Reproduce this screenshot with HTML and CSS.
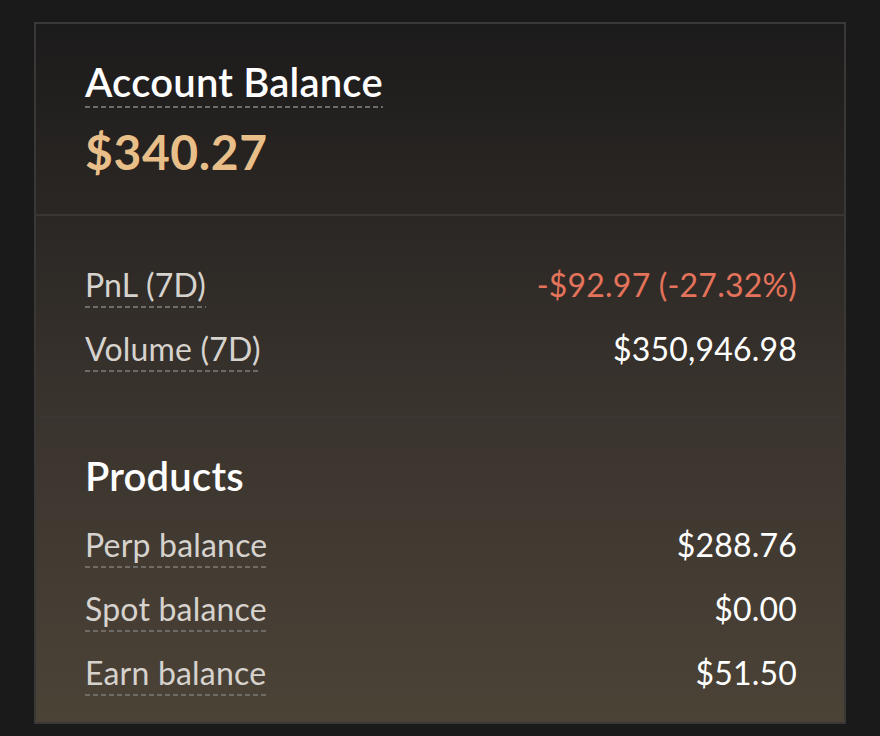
FILE: index.html
```html
<!DOCTYPE html>
<html>
<head>
<meta charset="utf-8">
<link rel="stylesheet" href="styles.css">
</head>
<body>
<div class="card">
  <section class="sec sec-top">
    <div class="title"><span class="dotted">Account Balance</span></div>
    <div class="big">$340.27</div>
  </section>
  <section class="sec sec-mid">
    <div class="rows">
      <div class="row"><span class="label dotted">PnL (7D)</span><span class="val neg">-$92.97 (-27.32%)</span></div>
      <div class="row"><span class="label dotted">Volume (7D)</span><span class="val">$350,946.98</span></div>
    </div>
  </section>
  <section class="sec sec-bot">
    <div class="title">Products</div>
    <div class="rows">
      <div class="row"><span class="label dotted">Perp balance</span><span class="val">$288.76</span></div>
      <div class="row"><span class="label dotted">Spot balance</span><span class="val">$0.00</span></div>
      <div class="row"><span class="label dotted">Earn balance</span><span class="val">$51.50</span></div>
    </div>
  </section>
</div>
</body>
</html>
```
FILE: styles.css
```css
html, body { margin: 0; padding: 0; }
body {
  background: #1b1a1a;
  font-family: "Lato", "Noto Sans", sans-serif;
  color: #fff;
  width: 880px;
  height: 736px;
  padding: 22px 34px 0 34px;
  box-sizing: border-box;
  overflow: hidden;
}
.card {
  border: 2px solid #3a3836;
  background: linear-gradient(180deg, #1c1b1b 0%, #2b2724 28%, #3a342e 56%, #4c4337 100%);
  height: 702px;
  box-sizing: border-box;
  display: flex;
  flex-direction: column;
}
.sec { padding-left: 49px; padding-right: 47px; box-sizing: border-box; }
.sec-top { height: 192px; padding-top: 34px; border-bottom: 2px solid #393633; }
.sec-mid { height: 202px; padding-top: 49px; border-bottom: 2px solid #3a3632; }
.sec-bot { flex: 1; padding-top: 34px; }
.title { font-size: 40px; font-weight: 600; line-height: 48px; color: #fff; letter-spacing: 0.2px; }
.big { font-size: 48px; font-weight: 700; color: #e8bf88; line-height: 56px; margin-top: 18px; letter-spacing: 0.6px; }
.dotted {
  background-image: repeating-linear-gradient(90deg, #6f6c68 0 5px, transparent 5px 8px);
  background-size: 100% 2px;
  background-position: 0 100%;
  background-repeat: no-repeat;
  padding-bottom: 3px;
}
.title .dotted { padding-bottom: 2px; }
.rows { display: flex; flex-direction: column; gap: 21px; }
.sec-bot .rows { margin-top: 25px; }
.row { display: flex; justify-content: space-between; align-items: baseline; line-height: 40px; font-size: 32px; }
.label { color: #d6d2cd; letter-spacing: 0.2px; }
.val { color: #fff; letter-spacing: 0.2px; }
.neg { color: #e4735b; }
```
